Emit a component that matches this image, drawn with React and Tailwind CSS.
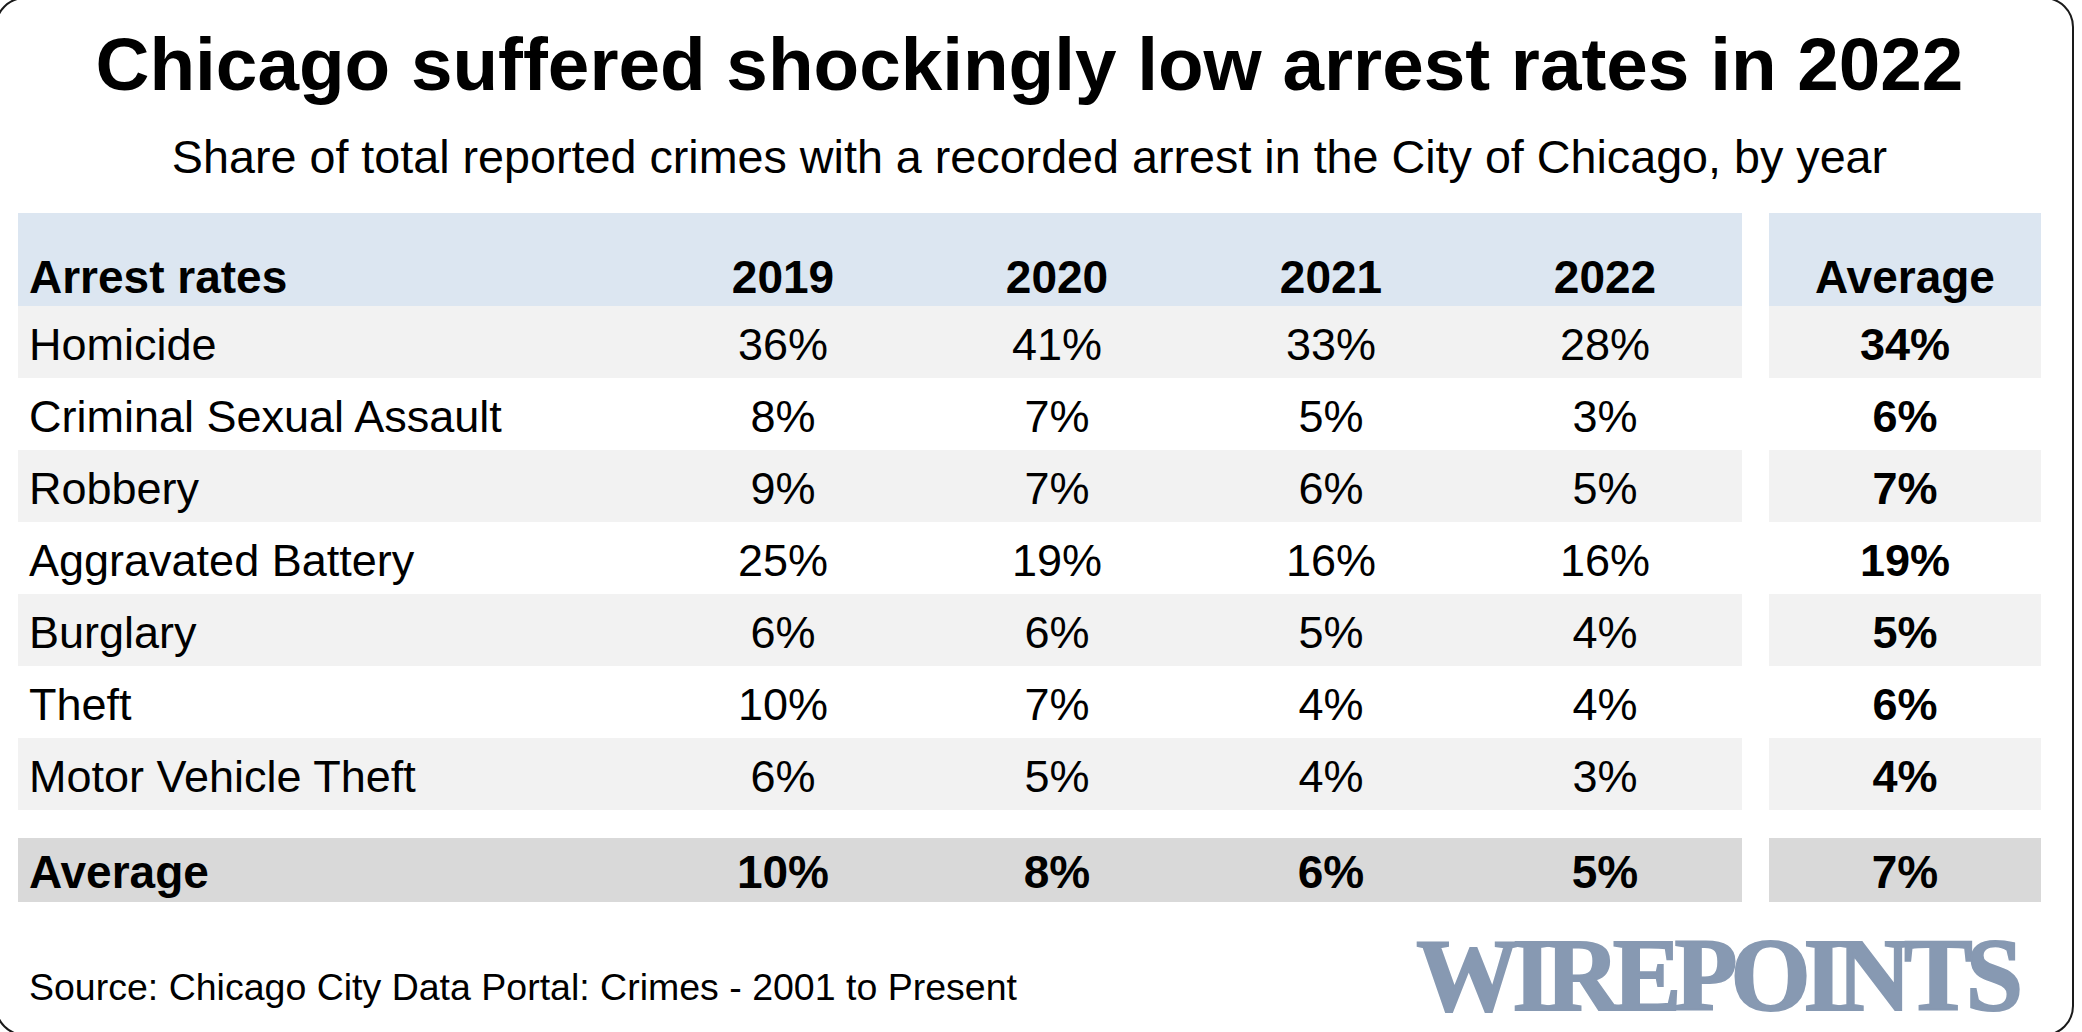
const years = ['2019', '2020', '2021', '2022'];

const rows = [
  { name: 'Homicide', values: ['36%', '41%', '33%', '28%'], avg: '34%' },
  { name: 'Criminal Sexual Assault', values: ['8%', '7%', '5%', '3%'], avg: '6%' },
  { name: 'Robbery', values: ['9%', '7%', '6%', '5%'], avg: '7%' },
  { name: 'Aggravated Battery', values: ['25%', '19%', '16%', '16%'], avg: '19%' },
  { name: 'Burglary', values: ['6%', '6%', '5%', '4%'], avg: '5%' },
  { name: 'Theft', values: ['10%', '7%', '4%', '4%'], avg: '6%' },
  { name: 'Motor Vehicle Theft', values: ['6%', '5%', '4%', '3%'], avg: '4%' },
];

const DataRow = ({ row, shaded }) => {
  const bg = shaded ? 'bg-[#f2f2f2]' : 'bg-white';
  return (
    <div className="flex h-[72px] text-[45px] leading-none">
      <div className={`flex ${bg}`}>
        <div className="w-[628px] flex items-center pl-[11px] pt-1">{row.name}</div>
        {row.values.map((v, i) => (
          <div key={i} className="w-[274px] flex items-center justify-center pt-1">
            {v}
          </div>
        ))}
      </div>
      <div className="w-[27px]" />
      <div className={`w-[272px] flex items-center justify-center pt-1 font-bold ${bg}`}>{row.avg}</div>
    </div>
  );
};

export default function App() {
  return (
    <div className="relative w-[2082px] h-[1032px] overflow-hidden bg-white text-black font-['Liberation_Sans',Arial,sans-serif]">
      {/* rounded frame around the graphic */}
      <div className="absolute left-[-5px] top-[-3px] w-[2079px] h-[1039px] rounded-[30px] border-2 border-[#1a1a1a] pointer-events-none" />

      <div className="relative pl-[18px] w-[2041px]">
        <h1 className="mt-[27px] text-center text-[74.7px] leading-none font-bold">
          Chicago suffered shockingly low arrest rates in 2022
        </h1>
        <p className="mt-[32px] text-center text-[46.7px] leading-none">
          Share of total reported crimes with a recorded arrest in the City of Chicago, by year
        </p>

        <div className="mt-[33px]">
          {/* header */}
          <div className="flex h-[93px] text-[46px] leading-none font-bold">
            <div className="flex bg-[#dce6f1]">
              <div className="w-[628px] flex items-end pl-[11px] pb-[6px]">Arrest rates</div>
              {years.map((y) => (
                <div key={y} className="w-[274px] flex items-end justify-center pb-[6px]">
                  {y}
                </div>
              ))}
            </div>
            <div className="w-[27px]" />
            <div className="w-[272px] flex items-end justify-center pb-[6px] bg-[#dce6f1]">Average</div>
          </div>

          {rows.map((row, i) => (
            <DataRow key={row.name} row={row} shaded={i % 2 === 0} />
          ))}

          {/* average row */}
          <div className="mt-[28px] flex h-[64px] text-[46px] leading-none font-bold">
            <div className="flex bg-[#d9d9d9]">
              <div className="w-[628px] flex items-center pl-[11px] pt-1">Average</div>
              {['10%', '8%', '6%', '5%'].map((v, i) => (
                <div key={i} className="w-[274px] flex items-center justify-center pt-1">
                  {v}
                </div>
              ))}
            </div>
            <div className="w-[27px]" />
            <div className="w-[272px] flex items-center justify-center pt-1 bg-[#d9d9d9]">7%</div>
          </div>
        </div>

        <div className="flex justify-between items-start">
          <p className="mt-[67px] pl-[11px] text-[37.5px] leading-none">
            Source: Chicago City Data Portal: Crimes - 2001 to Present
          </p>
          <div className="mt-[22px] pr-[25px] text-[103px] leading-none font-bold tracking-[-7px] text-[#8799b2] [-webkit-text-stroke:2px_#8799b2] font-['Liberation_Serif','Times_New_Roman',serif]">
            WIREPOINTS
          </div>
        </div>
      </div>
    </div>
  );
}
